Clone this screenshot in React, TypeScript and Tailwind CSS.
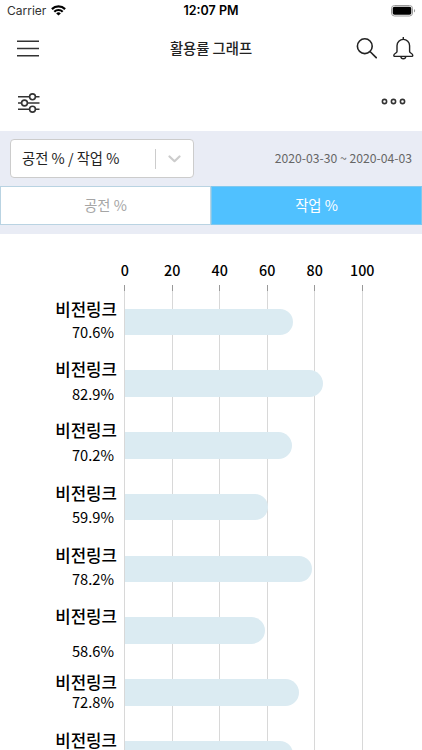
import React from 'react';

const ticks = [0, 20, 40, 60, 80, 100];

const machines = [
  { name: '비전링크', value: 70.6, nameGap: 'mt-0', valueGap: 'mt-[3px]' },
  { name: '비전링크', value: 82.9, nameGap: 'mt-[17px]', valueGap: 'mt-[5px]' },
  { name: '비전링크', value: 70.2, nameGap: 'mt-[16px]', valueGap: 'mt-[5px]' },
  { name: '비전링크', value: 59.9, nameGap: 'mt-[18px]', valueGap: 'mt-[4px]' },
  { name: '비전링크', value: 78.2, nameGap: 'mt-[18px]', valueGap: 'mt-[4px]' },
  { name: '비전링크', value: 58.6, nameGap: 'mt-[17px]', valueGap: 'mt-[15px]' },
  { name: '비전링크', value: 72.8, nameGap: 'mt-[11px]', valueGap: 'mt-0' },
  { name: '비전링크', value: 70.6, nameGap: 'mt-[18px]', valueGap: '' }
];

function StatusBar() {
  return (
    <div className="relative h-[21px] shrink-0 flex items-center justify-between pl-[7px] pr-[6px] font-['Inter',sans-serif] text-[12px] text-black">
      <div className="flex items-center gap-[5px]">
        <span className="text-[#333]">Carrier</span>
        <svg width="15" height="11" viewBox="0 0 15 11" fill="none" stroke="#000" strokeWidth="2.2">
          <path d="M0.9 4.1a9.4 9.4 0 0 1 13.2 0" />
          <path d="M3.3 6.7a6 6 0 0 1 8.4 0" />
          <path d="M7.5 10.6 5.2 8.4a3.3 3.3 0 0 1 4.6 0z" fill="#000" stroke="none" />
        </svg>
      </div>
      <span className="absolute inset-x-0 top-[2px] text-center text-[12.5px] leading-[18px] font-semibold">12:07 PM</span>
      <svg width="25" height="12" viewBox="0 0 25 12">
        <rect x="0.5" y="0.5" width="21" height="10.5" rx="3" fill="none" stroke="#999" />
        <rect x="1.7" y="1.8" width="18.6" height="8" rx="1.8" fill="#000" />
        <path d="M23 4v3.6a2 2 0 0 0 0-3.6z" fill="#999" />
      </svg>
    </div>
  );
}

function Header() {
  return (
    <header className="relative h-[54px] shrink-0 flex items-center justify-between pl-[17px] pr-[8px]">
      <svg width="22" height="17" viewBox="0 0 22 17" stroke="#333" strokeWidth="1.5">
        <path d="M0 1.2h22M0 8.5h22M0 15.8h22" />
      </svg>
      <h1 className="absolute inset-x-0 -mt-px text-center text-[14.3px] font-medium text-[#222]">활용률 그래프</h1>
      <div className="flex items-center gap-[16px]">
        <svg width="21" height="21" viewBox="0 0 21 21" fill="none" stroke="#222" strokeWidth="1.6">
          <circle cx="8.8" cy="8.2" r="7.4" />
          <path d="m14 13.5 6.7 6.7" />
        </svg>
        <svg width="21" height="23" viewBox="0 0 21 23" fill="none" stroke="#222" strokeWidth="1.4">
          <path d="M10.3 0v2.5" />
          <path d="M4 14.5V8.7a6.3 6.3 0 0 1 12.6 0v5.8c0 1.7 3.2 1.8 3.2 3.9 0 .7-.5 1-1.2 1H2c-.7 0-1.2-.3-1.2-1 0-2.1 3.2-2.2 3.2-3.9z" />
          <path d="M7.8 19.5c.3 3 4.7 3 5 0" />
        </svg>
      </div>
    </header>
  );
}

function Toolbar() {
  return (
    <div className="h-[56px] shrink-0 flex items-center justify-between pl-[17px] pr-[16px]">
      <svg width="23" height="20" viewBox="0 0 23 20" fill="none" stroke="#333" strokeWidth="1.6">
        <path d="M1 3.8h11.5M18.5 3.8h4M1 10h3.5M10.5 10h12M1 16.2h11.5M18.5 16.2h4" />
        <circle cx="15.5" cy="3.8" r="2.9" />
        <circle cx="7.5" cy="10" r="2.9" />
        <circle cx="15.5" cy="16.2" r="2.9" />
      </svg>
      <svg className="-mt-1" width="25" height="7" viewBox="0 0 25 7" fill="none" stroke="#333" strokeWidth="1.6">
        <circle cx="3.5" cy="3.5" r="2.1" />
        <circle cx="12.5" cy="3.5" r="2.1" />
        <circle cx="21.5" cy="3.5" r="2.1" />
      </svg>
    </div>
  );
}

function Filters() {
  return (
    <section className="h-[103px] shrink-0 bg-[#e9ecf5] pt-[8px]">
      <div className="flex items-center justify-between px-[10px]">
        <button className="w-[184px] h-[39px] flex items-center rounded-[4px] border border-[#ccc] bg-white pl-[11px] pr-[12px]">
          <span className="flex-1 -mt-px text-left text-[14.3px] text-[#222]">공전 % / 작업 %</span>
          <span className="w-px h-[20px] bg-[#ccc]" />
          <svg className="ml-[12px]" width="13" height="8" viewBox="0 0 13 8" fill="none" stroke="#ccc" strokeWidth="2.2" strokeLinecap="round" strokeLinejoin="round">
            <path d="m1.5 1.5 5 4.700 5-4.700" />
          </svg>
        </button>
        <span className="text-[12.2px] text-[#666]">2020-03-30 ~ 2020-04-03</span>
      </div>
      <div className="mt-[8px] h-[39px] flex text-[14.3px]">
        <button className="w-[211px] pb-[2px] border border-[#b9d3e2] bg-white text-[#a5a5a5]">공전 %</button>
        <button className="flex-1 pb-[2px] border border-[#7fc8ee] bg-[#50c1ff] text-white">작업 %</button>
      </div>
    </section>
  );
}

function Chart() {
  return (
    <main className="flex-1 min-h-0 overflow-hidden flex text-black">
      <div className="w-[124px] shrink-0 pt-[65px] flex flex-col text-right">
        {machines.map((m, i) => (
          <React.Fragment key={i}>
            <div className={`${m.nameGap} h-[20px] shrink-0 pr-[7px] text-[16.8px] leading-[20px] font-medium`}>{m.name}</div>
            {m.valueGap && (
              <div className={`${m.valueGap} h-[20px] shrink-0 pr-[10px] text-[14.7px] leading-[20px]`}>{m.value}%</div>
            )}
          </React.Fragment>
        ))}
      </div>
      <div className="w-[285px] shrink-0 flex flex-col">
        <div className="h-[51px] shrink-0 -ml-[23px] pt-[26px] flex">
          {ticks.map((t) => (
            <span key={t} className="w-[47.5px] text-center text-[14.3px] leading-[20px] font-medium">{t}</span>
          ))}
        </div>
        <div className="relative flex-1">
          <div className="absolute inset-0 flex">
            {ticks.map((t) => (
              <div key={t} className="w-[47.5px] border-l border-[#d8d8d8]">
                <div className="-ml-px w-px h-[6px] bg-[#999]" />
              </div>
            ))}
          </div>
          <div className="relative pt-[23.6px] pl-px">
            {machines.map((m, i) => (
              <div key={i} className="h-[61.75px]">
                <div className="h-[26.5px] rounded-r-full bg-[#dbebf2]" style={{ width: m.value * 2.385 }} />
              </div>
            ))}
          </div>
        </div>
      </div>
    </main>
  );
}

export default function App() {
  return (
    <div className="w-full h-[750px] overflow-hidden flex flex-col bg-white font-['Noto_Sans_CJK_KR',sans-serif]">
      <StatusBar />
      <Header />
      <Toolbar />
      <Filters />
      <Chart />
    </div>
  );
}
